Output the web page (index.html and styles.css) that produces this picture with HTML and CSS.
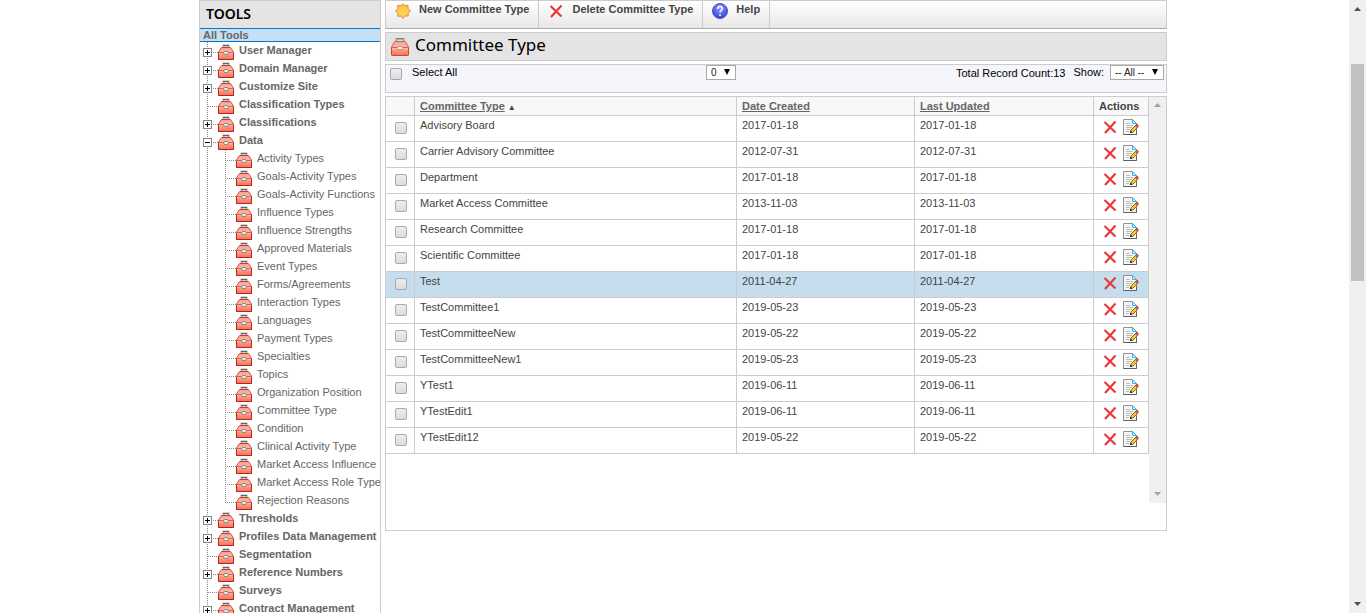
FILE: index.html
```html
<!DOCTYPE html>
<html lang="en">
<head>
<meta charset="utf-8">
<title>Committee Type</title>
<link rel="stylesheet" href="styles.css">
<script src="app.js" defer></script>
</head>
<body>
<svg class="sprite" aria-hidden="true">
  <defs>
    <linearGradient id="red" x1="0" y1="0" x2="0" y2="1"><stop offset="0" stop-color="#ff9f88"/><stop offset=".4" stop-color="#ffb9a4"/><stop offset=".6" stop-color="#ff9a80"/><stop offset="1" stop-color="#f96e55"/></linearGradient>
    <radialGradient id="blue" cx=".5" cy=".3" r=".7"><stop offset="0" stop-color="#8d9bff"/><stop offset="1" stop-color="#3040dc"/></radialGradient>
    <linearGradient id="gold" x1="0" y1="0" x2="0" y2="1"><stop offset="0" stop-color="#ffc530"/><stop offset="1" stop-color="#ffd966"/></linearGradient>
    <symbol id="toolbox" viewBox="0 0 16 16">
      <path d="M5.500 3.500v-2h5v2" fill="none" stroke="#aaa" stroke-width="2"/>
      <path d="M5 1.500h6" stroke="#666"/>
      <path d="M3.500 3.500h9l3 4.500v7.500H.5V8z" fill="url(#red)" stroke="#d0584c"/>
      <path d="M4 3.500h8" stroke="#b8423a"/>
      <path d="M1 8.500h14" stroke="#d86053"/>
      <path d="M1 9.500h14" stroke="#ffb3a0"/>
      <path d="M.5 9v6.500h15V9" fill="none" stroke="#b42420"/>
      <rect x="5.500" y="7.500" width="5" height="3" rx="1.500" fill="#eee" stroke="#8a8a8a"/>
    </symbol>
    <symbol id="toolbox-large" viewBox="0 0 20 20">
      <path d="M6.500 4.500V2h7v2.500" fill="none" stroke="#a8a8a8" stroke-width="2"/>
      <path d="M6 1.500h8" stroke="#888"/>
      <path d="M4.500 4.500h11l3 5.500v7.500q0 1-1 1h-15q-1 0-1-1V10z" fill="url(#red)" stroke="#d6605a"/>
      <path d="M1.500 10.500h17" stroke="#d65c50"/>
      <path d="M2 11.500h16" stroke="#ffb3a0"/>
      <path d="M1.500 11v6.500q0 1 1 1h15q1 0 1-1V11" fill="none" stroke="#cc4440"/>
      <rect x="7.500" y="9.500" width="5" height="3" rx="1" fill="#eee" stroke="#999"/>
    </symbol>
    <symbol id="cross" viewBox="0 0 16 16">
      <path d="M2.500 3l11 10.500M13.500 2.500L3 14" fill="none" stroke="#e8393c" stroke-width="2.200"/>
    </symbol>
    <symbol id="edit" viewBox="0 0 16 16">
      <path d="M.5.500h9l4 4v11H.5z" fill="#f6f6f6" stroke="#909090"/>
      <path d="M.5 15.500h13V11" fill="none" stroke="#606060"/>
      <path d="M9.500.500v4h4z" fill="#cdeeff" stroke="#45aee5"/>
      <path d="M3 4.500h4M3 6.500h7M3 8.500h6M3 10.500h4M3 12.500h3" stroke="#bcbcbc"/>
      <path d="M7.500 13.500l.5-2.500 4.500-4.500 2 2L10 13z" fill="#ffc928" stroke="#6b4712" stroke-width=".8"/>
      <path d="M12.300 6.700l1.200-1.400q1.500-.3 2 1.500l-1.200 1.600z" fill="#e05c4c" stroke="#7a3524" stroke-width=".6"/>
      <path d="M7 14l.6-2.200L9.300 13.400z" fill="#111"/>
    </symbol>
    <symbol id="sun" viewBox="0 0 16 16">
      <path d="M8 .8l1.900 2.100 3.200-.6-.2 3.300L15.500 8l-2.600 2.100.3 3-3.300-.2L8 15.500l-2-2.600-3.200.4.200-3.300L.5 8 3 5.800l-.3-3.200 3.400.3z" fill="url(#gold)" stroke="#e0892c"/>
    </symbol>
    <symbol id="help" viewBox="0 0 16 16">
      <circle cx="8" cy="8" r="7.500" fill="url(#blue)" stroke="#4450b8"/>
      <path d="M5.700 6c0-3.200 4.700-3.100 4.700-.4 0 1.900-2.400 1.900-2.400 4M8 11.300v1.700" fill="none" stroke="#fff" stroke-width="1.500"/>
    </symbol>
  </defs>
</svg>

<div class="page">
  <aside class="sidebar">
    <h2 class="sidebar-title">TOOLS</h2>
    <a class="all-tools" href="#">All Tools</a>
    <ul class="tree" id="tree"></ul>
  </aside>

  <main class="content">
    <div class="toolbar">
      <button type="button" class="tool"><svg><use href="#sun"/></svg><span>New Committee Type</span></button>
      <button type="button" class="tool"><svg><use href="#cross"/></svg><span>Delete Committee Type</span></button>
      <button type="button" class="tool"><svg><use href="#help"/></svg><span>Help</span></button>
    </div>
    <header class="title-bar"><svg><use href="#toolbox-large"/></svg><h1>Committee Type</h1></header>
    <div class="filter">
      <div class="select-all"><input type="checkbox" class="check" id="all"><label for="all">Select All</label></div>
      <div class="select"><select aria-label="Page"><option>0</option></select></div>
      <div class="show"><span class="count">Total Record Count:13</span><label for="show">Show:</label>
        <div class="select all-select"><select id="show"><option>-- All --</option></select></div></div>
    </div>
    <section class="grid">
      <div class="grid-body">
        <table>
          <colgroup><col class="col-check"><col><col class="col-date"><col class="col-updated"><col class="col-actions"></colgroup>
          <thead><tr><th></th><th><a href="#">Committee Type</a> <span class="sort">▲</span></th><th><a href="#">Date Created</a></th><th><a href="#">Last Updated</a></th><th>Actions</th></tr></thead>
          <tbody id="rows"></tbody>
        </table>
        <div class="inner-scroll"><i class="up"></i><i class="down"></i></div>
      </div>
    </section>
  </main>
</div>
<div class="page-scroll"><i class="up"></i><b></b><i class="down"></i></div>
</body>
</html>
```

FILE: styles.css
```css
* { box-sizing: border-box; }
body { margin: 0; overflow: hidden; background: #fff; font-family: "Liberation Sans", Arial, sans-serif; font-size: 11px; line-height: 16px; color: #444; }
button, input, select { font: inherit; color: inherit; margin: 0; }
h1, h2, ul { margin: 0; padding: 0; }
svg { display: block; flex: none; width: 16px; height: 16px; }
.sprite { position: absolute; width: 0; height: 0; }

.page { display: flex; gap: 4px; max-width: 968px; height: 100vh; margin: 0 auto; }

.sidebar { flex: none; width: 182px; border: solid #ccc; border-width: 1px 1px 0; overflow: hidden; }
.sidebar-title { height: 27px; padding-left: 6px; background: #e4e4e4; color: #000; font: 600 14px/25px "Noto Sans", sans-serif; }
.all-tools { display: block; height: 14px; padding-left: 3px; border: solid #0078d7; border-width: 1px 0; background: #c7dff3; color: #666; font-weight: bold; line-height: 13px; text-decoration: none; }
.tree { list-style: none; padding-left: 3px; }
.tree ul { list-style: none; padding-left: 22px; }
.tree li { background: linear-gradient(#888 50%, transparent 50%) 4px 0 / 1px 2px repeat-y; }
.tree ul li { background-position: 0 0; }
.tree ul li:last-child { background: none; }
.row { display: flex; height: 18px; color: #666; white-space: nowrap; }
.row a { margin-left: 5px; color: inherit; text-decoration: none; line-height: 17px; }
.row > svg { margin-top: 2px; }
.tree > li > .row { font-weight: bold; }
.toggle { width: 9px; height: 9px; margin-top: 6px; padding: 0; border: 1px solid #848484; background: linear-gradient(#000, #000) center / 5px 1px no-repeat #fff; }
.toggle.plus { background: linear-gradient(#000, #000) center / 5px 1px no-repeat, linear-gradient(#000, #000) center / 1px 5px no-repeat, #fff; }
.dash { flex: none; width: 6px; height: 1px; margin-top: 10px; background: linear-gradient(90deg, transparent 50%, #888 50%) 0 0 / 2px 1px; }
.dash.long { width: 11px; margin-left: 4px; }
.branch { flex: none; width: 11px; height: 11px; background: linear-gradient(#888 50%, transparent 50%) 0 0 / 1px 2px repeat-y, linear-gradient(90deg, #888 50%, transparent 50%) 0 100% / 2px 1px repeat-x; }

.content { flex: 1; min-width: 0; }
.toolbar { display: flex; height: 29px; border: 1px solid #ccc; border-bottom-color: #aaa; background: linear-gradient(#fff, #e7e7e7); }
.tool { display: flex; gap: 8px; align-items: flex-start; padding: 1px 9px 0 9px; border: 0; border-right: 1px solid #ccc; background: none; font-weight: bold; color: #444; }
.tool span { line-height: 14px; }
.tool svg { margin-top: 1px; }
.title-bar { display: flex; gap: 5px; height: 29px; margin-top: 3px; padding: 4px 5px 0 4px; border: 1px solid #ccc; background: #e4e4e4; }
.title-bar svg { width: 20px; height: 20px; }
.title-bar h1 { color: #000; font: 17px/15px "Noto Sans", sans-serif; }
.filter { display: grid; grid-template-columns: 320px 30px 1fr; height: 29px; margin-top: 3px; border: 1px solid #ccc; background: #f4f6fb; color: #000; }
.select-all { display: flex; gap: 10px; padding-left: 4px; line-height: 14px; }
.select-all .check { margin-top: 3px; }
.check { appearance: none; display: block; width: 12px; height: 12px; border: 1px solid #a8a8a8; border-radius: 2px; background: linear-gradient(#eee, #dcdcdc); }
.select { position: relative; height: 15px; }
.select select { appearance: none; display: block; width: 100%; height: 15px; padding: 0 4px; border: 1px solid #a9a9a9; background: #fff; color: #222; font-size: 10px; line-height: 13px; }
.select::after { content: ""; position: absolute; top: 4px; right: 6px; border: solid transparent; border-width: 6px 3px 0; border-top-color: #000; pointer-events: none; }
.show { display: flex; justify-content: flex-end; padding-right: 2px; line-height: 14px; }
.count { margin-right: 8px; line-height: 16px; }
.show label { margin-right: 6px; }
.all-select { width: 54px; }

.grid { height: 435px; margin-top: 3px; border: 1px solid #ccc; }
.grid-body { display: flex; align-items: flex-start; }
table { flex: 1; min-width: 0; width: 0; margin: -1px 0 0 -1px; table-layout: fixed; border-collapse: collapse; }
.col-check { width: 29px; }
.col-date { width: 178px; }
.col-updated { width: 179px; }
.col-actions { width: 55px; }
th, td { padding: 1px 5px 0; border: 1px solid #ccc; text-align: left; vertical-align: top; }
th { height: 19px; background: #f8f8f8; color: #444; }
th a { color: #666; }
.sort { font-size: 8px; line-height: 8px; }
td { height: 26px; }
td .check { margin: 5px 0 0 4px; }
.selected { background: #c6dded; }
.actions { display: flex; gap: 5px; padding: 2px 0 0 3px; }
.actions button { padding: 0; border: 0; background: none; }
.inner-scroll { display: flex; flex-direction: column; justify-content: space-between; align-items: center; width: 17px; height: 406px; padding: 6px 0 7px; background: #f0f0f0; }
.up, .down { width: 7px; height: 4px; background: #a3a3a3; clip-path: polygon(50% 0, 100% 100%, 0 100%); }
.down { clip-path: polygon(0 0, 100% 0, 50% 100%); }
.page-scroll { position: fixed; top: 0; right: 0; bottom: 0; display: flex; flex-direction: column; align-items: center; width: 17px; padding: 7px 0; background: #f0f0f0; }
.page-scroll i { background: #505050; }
.page-scroll b { width: 13px; height: 217px; margin: 53px 0 auto; background: #c1c1c1; }
```

FILE: app.js
```javascript
const icon = (name) => `<svg aria-hidden="true"><use href="#${name}"/></svg>`;

const dataTools = [
  "Activity Types", "Goals-Activity Types", "Goals-Activity Functions", "Influence Types",
  "Influence Strengths", "Approved Materials", "Event Types", "Forms/Agreements",
  "Interaction Types", "Languages", "Payment Types", "Specialties", "Topics",
  "Organization Position", "Committee Type", "Condition", "Clinical Activity Type",
  "Market Access Influence", "Market Access Role Type", "Rejection Reasons"
];

const tools = [
  ["User Manager", "plus"], ["Domain Manager", "plus"], ["Customize Site", "plus"],
  ["Classification Types", ""], ["Classifications", "plus"], ["Data", "minus", dataTools],
  ["Thresholds", "plus"], ["Profiles Data Management", "plus"], ["Segmentation", ""],
  ["Reference Numbers", "plus"], ["Surveys", ""], ["Contract Management", "plus"]
];

document.getElementById("tree").innerHTML = tools.map(([name, state, children = []]) => `
  <li><div class="row">${state
    ? `<button type="button" class="toggle ${state}" aria-label="Toggle ${name}"></button><span class="dash"></span>`
    : `<span class="dash long"></span>`}${icon("toolbox")}<a href="#">${name}</a></div>
  ${children.length ? `<ul>${children.map((child) =>
    `<li><div class="row"><span class="branch"></span>${icon("toolbox")}<a href="#">${child}</a></div></li>`).join("")}</ul>` : ""}</li>`).join("");

const committees = [
  ["Advisory Board", "2017-01-18"], ["Carrier Advisory Committee", "2012-07-31"],
  ["Department", "2017-01-18"], ["Market Access Committee", "2013-11-03"],
  ["Research Committee", "2017-01-18"], ["Scientific Committee", "2017-01-18"],
  ["Test", "2011-04-27"], ["TestCommittee1", "2019-05-23"], ["TestCommitteeNew", "2019-05-22"],
  ["TestCommitteeNew1", "2019-05-23"], ["YTest1", "2019-06-11"], ["YTestEdit1", "2019-06-11"],
  ["YTestEdit12", "2019-05-22"]
];

document.getElementById("rows").innerHTML = committees.map(([name, date]) => `
  <tr class="${name === "Test" ? "selected" : ""}">
    <td><input type="checkbox" class="check" aria-label="Select ${name}"></td>
    <td>${name}</td><td>${date}</td><td>${date}</td>
    <td><div class="actions"><button type="button" aria-label="Delete ${name}">${icon("cross")}</button><button type="button" aria-label="Edit ${name}">${icon("edit")}</button></div></td>
  </tr>`).join("");
```
